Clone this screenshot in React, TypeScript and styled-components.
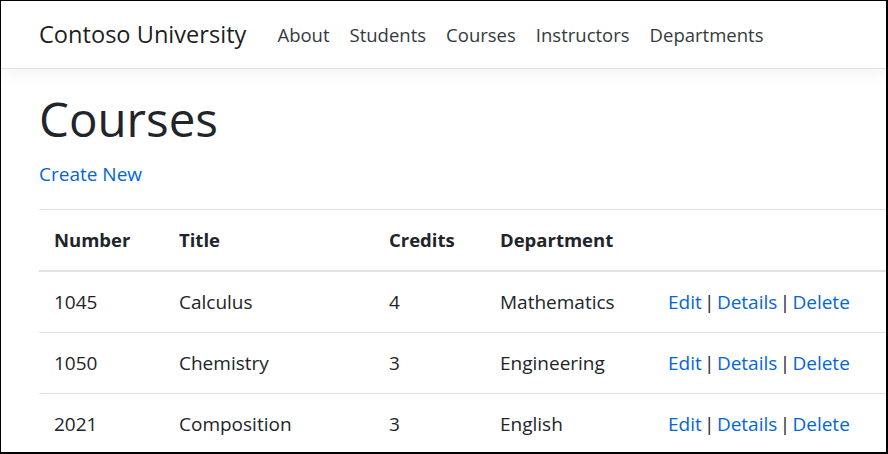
import React from "react";
import styled, { createGlobalStyle } from "styled-components";

const GlobalStyle = createGlobalStyle`
  html, body { margin: 0; padding: 0; background: #fff; }
  body { font-family: "Open Sans", "Noto Sans", sans-serif; color: #212529; }
  * { box-sizing: border-box; }
`;

const Frame = styled.div`
  width: 888px;
  height: 454px;
  border-style: solid;
  border-color: #000;
  border-width: 1px 2px 2px 1px;
  overflow: hidden;
  background: #fff;
`;

const NavBar = styled.nav`
  height: 68px;
  display: flex;
  align-items: center;
  padding-left: 38px;
  border-bottom: 1px solid #dee2e6;
  box-shadow: 0 5px 15px rgba(0, 0, 0, 0.05);
  position: relative;
`;

const Brand = styled.a`
  font-size: 23.6px;
  line-height: 37px;
  color: rgba(0, 0, 0, 0.9);
  text-decoration: none;
  margin-right: 21px;
`;

const NavList = styled.ul`
  display: flex;
  list-style: none;
  margin: 0;
  padding: 0;
`;

const NavLink = styled.a`
  display: block;
  padding: 0 10px;
  font-size: 18.5px;
  line-height: 30px;
  color: #343a40;
  text-decoration: none;
`;

const Main = styled.main`
  padding: 20px 0 0 38px;
`;

const Title = styled.h1`
  margin: 0 0 10px;
  font-size: 47.5px;
  line-height: 60px;
  font-weight: 500;
  color: #212529;
`;

const Para = styled.p`
  margin: 0 0 20px;
  font-size: 19px;
  line-height: 30px;
`;

const Link = styled.a`
  color: #0366d6;
  text-decoration: none;
`;

const Table = styled.table`
  width: 100%;
  border-collapse: collapse;
  table-layout: fixed;
  font-size: 19px;
  line-height: 30px;
`;

const Th = styled.th<{ $w?: number }>`
  text-align: left;
  font-weight: 700;
  font-size: 18.5px;
  padding: 15px 15px;
  border-top: 1px solid #dee2e6;
  border-bottom: 2px solid #dee2e6;
  width: ${(p) => (p.$w ? `${p.$w}px` : "auto")};
  white-space: nowrap;
`;

const Td = styled.td`
  padding: 15px 15px;
  border-top: 1px solid #dee2e6;
  white-space: nowrap;
`;

const Actions = styled(Td)`
  word-spacing: -2.6px;
`;

const Sep = styled.span`
  color: #212529;
`;

const courses = [
  { n: "1045", t: "Calculus", c: "4", d: "Mathematics" },
  { n: "1050", t: "Chemistry", c: "3", d: "Engineering" },
  { n: "2021", t: "Composition", c: "3", d: "English" },
];

export default function App() {
  return (
    <>
      <GlobalStyle />
      <Frame>
        <NavBar>
          <Brand href="#">Contoso University</Brand>
          <NavList>
            {["About", "Students", "Courses", "Instructors", "Departments"].map((l) => (
              <li key={l}>
                <NavLink href="#">{l}</NavLink>
              </li>
            ))}
          </NavList>
        </NavBar>
        <Main>
          <Title>Courses</Title>
          <Para>
            <Link href="#">Create New</Link>
          </Para>
          <Table>
            <thead>
              <tr>
                <Th $w={125}>Number</Th>
                <Th $w={210}>Title</Th>
                <Th $w={111}>Credits</Th>
                <Th $w={168}>Department</Th>
                <Th />
              </tr>
            </thead>
            <tbody>
              {courses.map((r) => (
                <tr key={r.n}>
                  <Td>{r.n}</Td>
                  <Td>{r.t}</Td>
                  <Td>{r.c}</Td>
                  <Td>{r.d}</Td>
                  <Actions>
                    <Link href="#">Edit</Link> <Sep>|</Sep> <Link href="#">Details</Link>{" "}
                    <Sep>|</Sep> <Link href="#">Delete</Link>
                  </Actions>
                </tr>
              ))}
            </tbody>
          </Table>
        </Main>
      </Frame>
    </>
  );
}
